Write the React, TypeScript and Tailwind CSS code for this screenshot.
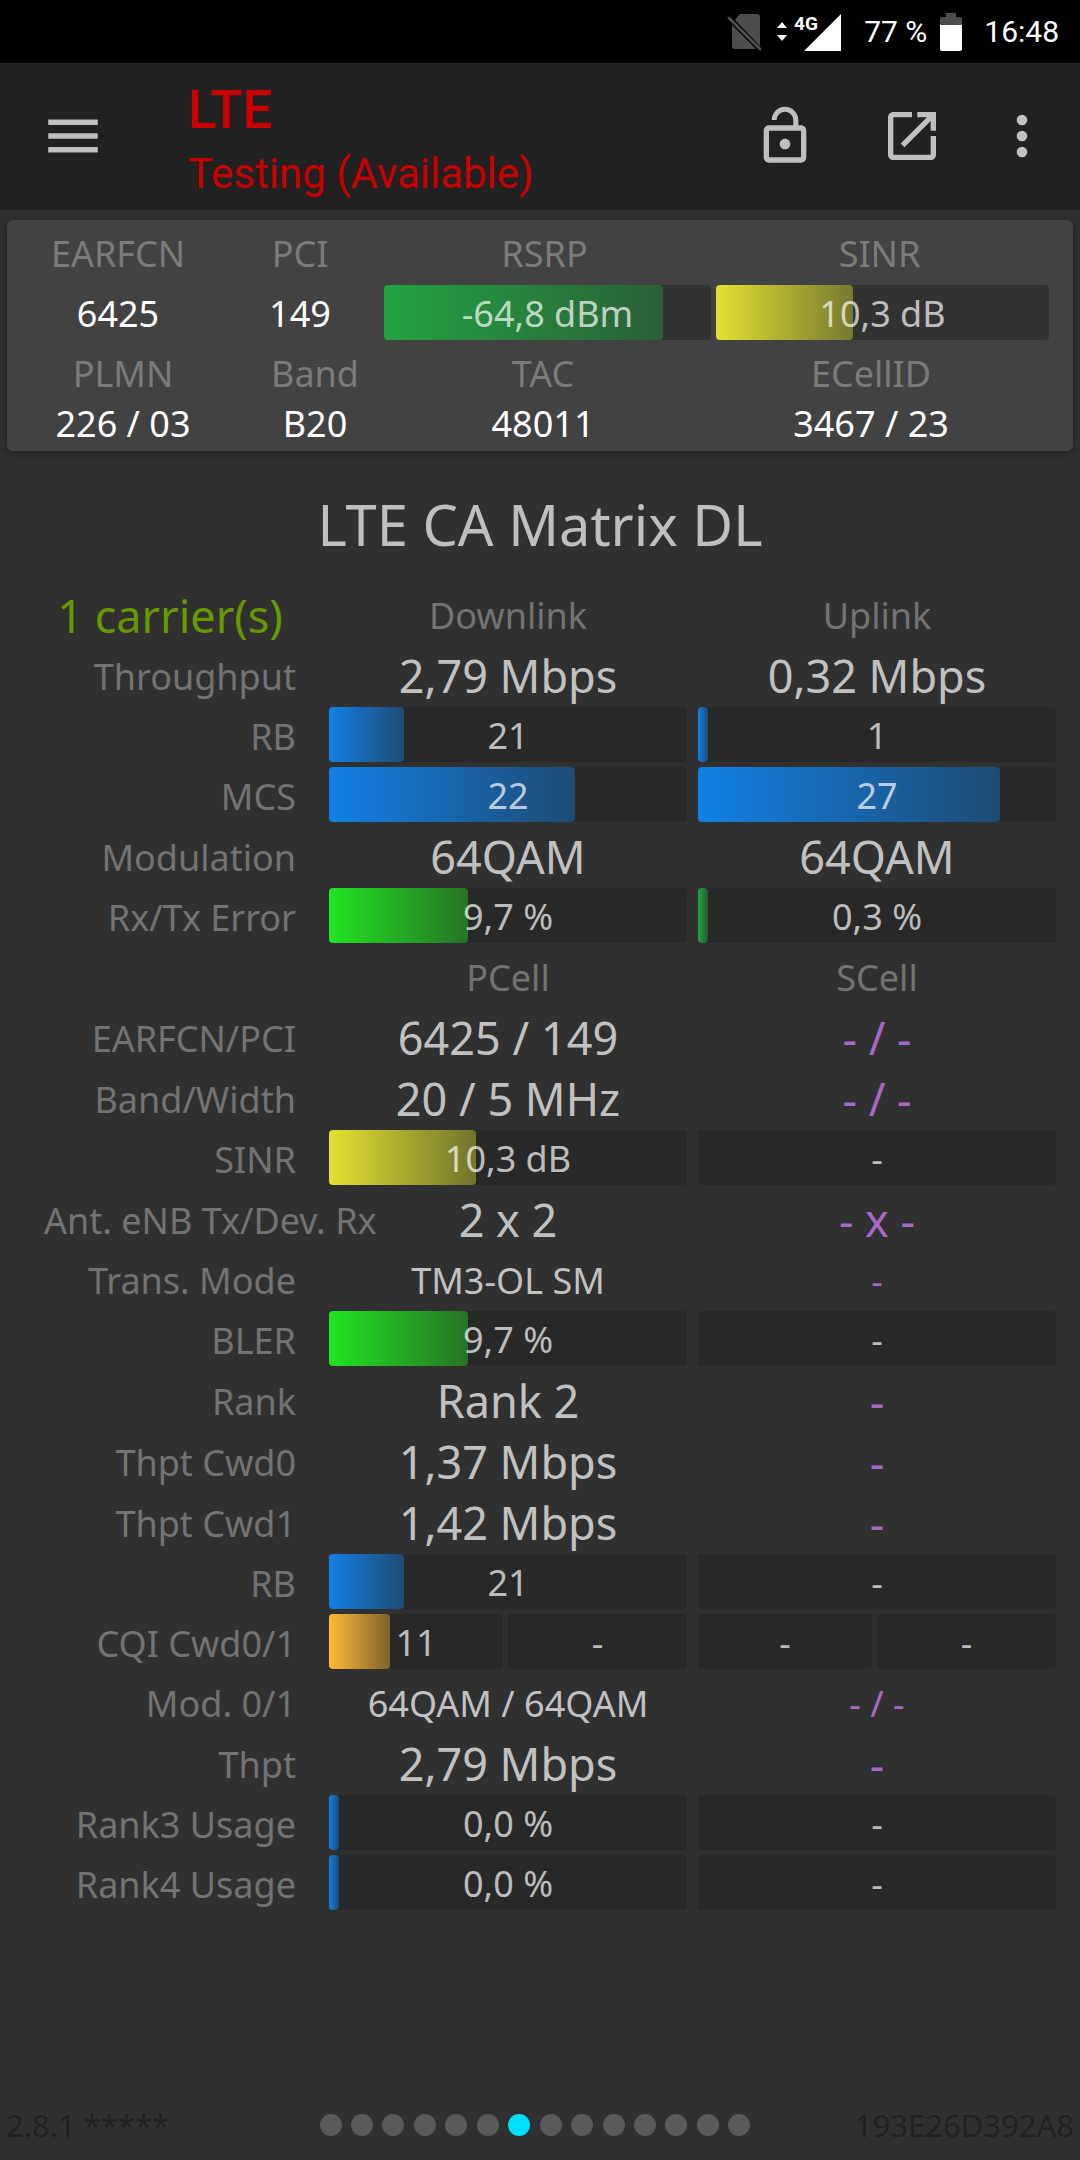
import React from 'react';
import clsx from 'clsx';

type Tone = 'blue' | 'green' | 'lime' | 'yellow' | 'orange';

interface BarData {
  text: string;
  fill?: number;
  tone?: Tone;
}

interface TextData {
  text: string;
  small?: boolean;
  muted?: boolean;
}

type CellData = { bars: BarData[] } | TextData;

interface RowData {
  label: string;
  cells: [CellData, CellData];
}

const TONES: Record<Tone, string> = {
  blue: 'from-[#1180e6] to-[#1180e6]/40',
  green: 'from-[#22a442] to-[#22a442]/40',
  lime: 'from-[#22e422] to-[#22e422]/40',
  yellow: 'from-[#e2e232] to-[#e2e232]/40',
  orange: 'from-[#ffba36] to-[#ffba36]/40',
};

const bar = (text: string, fill?: number, tone?: Tone): CellData => ({ bars: [{ text, fill, tone }] });
const none = (text = '-', small = false): CellData => ({ text, small, muted: true });

const TRAFFIC_ROWS: RowData[] = [
  { label: 'Throughput', cells: [{ text: '2,79 Mbps' }, { text: '0,32 Mbps' }] },
  { label: 'RB', cells: [bar('21', 21, 'blue'), bar('1', 2.8, 'blue')] },
  { label: 'MCS', cells: [bar('22', 68.8, 'blue'), bar('27', 84.4, 'blue')] },
  { label: 'Modulation', cells: [{ text: '64QAM' }, { text: '64QAM' }] },
  { label: 'Rx/Tx Error', cells: [bar('9,7 %', 38.8, 'lime'), bar('0,3 %', 2.8, 'green')] },
];

const CELL_ROWS: RowData[] = [
  { label: 'EARFCN/PCI', cells: [{ text: '6425 / 149' }, none('- / -')] },
  { label: 'Band/Width', cells: [{ text: '20 / 5 MHz' }, none('- / -')] },
  { label: 'SINR', cells: [bar('10,3 dB', 41, 'yellow'), bar('-')] },
  { label: 'Ant. eNB Tx/Dev. Rx', cells: [{ text: '2 x 2' }, none('- x -')] },
  { label: 'Trans. Mode', cells: [{ text: 'TM3-OL SM', small: true }, none('-', true)] },
  { label: 'BLER', cells: [bar('9,7 %', 38.8, 'lime'), bar('-')] },
  { label: 'Rank', cells: [{ text: 'Rank 2' }, none()] },
  { label: 'Thpt Cwd0', cells: [{ text: '1,37 Mbps' }, none()] },
  { label: 'Thpt Cwd1', cells: [{ text: '1,42 Mbps' }, none()] },
  { label: 'RB', cells: [bar('21', 21, 'blue'), bar('-')] },
  {
    label: 'CQI Cwd0/1',
    cells: [
      { bars: [{ text: '11', fill: 35, tone: 'orange' }, { text: '-' }] },
      { bars: [{ text: '-' }, { text: '-' }] },
    ],
  },
  { label: 'Mod. 0/1', cells: [{ text: '64QAM / 64QAM', small: true }, none('- / -', true)] },
  { label: 'Thpt', cells: [{ text: '2,79 Mbps' }, none()] },
  { label: 'Rank3 Usage', cells: [bar('0,0 %', 2.8, 'blue'), bar('-')] },
  { label: 'Rank4 Usage', cells: [bar('0,0 %', 2.8, 'blue'), bar('-')] },
];

const PAGE_COUNT = 14;
const ACTIVE_PAGE = 6;

const Meter: React.FC<BarData & { track?: string }> = ({ text, fill, tone, track = 'bg-[#282828]' }) => (
  <div className={clsx('relative h-[55px] rounded-sm text-center', track)}>
    {fill && tone && (
      <div
        className={clsx('absolute inset-y-0 left-0 rounded-sm bg-linear-to-r', TONES[tone])}
        style={{ width: `${fill}%` }}
      />
    )}
    <span className="relative block leading-[57px] text-white/70">{text}</span>
  </div>
);

const ValueCell: React.FC<{ data: CellData }> = ({ data }) => {
  if ('bars' in data) {
    return (
      <td className="p-0 pr-[11px] pb-[5px]">
        <div className={clsx('grid gap-[5px]', data.bars.length > 1 ? 'grid-cols-[174fr_179fr]' : 'grid-cols-1')}>
          {data.bars.map((b, i) => (
            <Meter key={i} {...b} />
          ))}
        </div>
      </td>
    );
  }

  return (
    <td
      className={clsx(
        'pt-0.5 pr-[11px] pb-[3px] text-center whitespace-nowrap',
        data.small ? 'leading-[55px]' : 'text-[45px] leading-[56px]',
        data.muted ? 'text-[#a868c8]' : 'text-[#c1c1c1]'
      )}
    >
      {data.text}
    </td>
  );
};

const Row: React.FC<{ row: RowData }> = ({ row }) => (
  <tr>
    <th
      scope="row"
      className={clsx(
        'pt-0.5 pr-[33px] pb-[3px] pl-11 font-normal whitespace-nowrap leading-[55px] text-[#737373]',
        row.label.length > 15 ? 'text-left' : 'text-right'
      )}
    >
      {row.label}
    </th>
    <ValueCell data={row.cells[0]} />
    <ValueCell data={row.cells[1]} />
  </tr>
);

const ColumnHead: React.FC<{ children: string }> = ({ children }) => (
  <th scope="col" className="pt-0.5 pr-[11px] pb-[3px] text-center font-normal leading-[55px] text-[#737373]">
    {children}
  </th>
);

const StatusBar = () => (
  <div className="flex h-[63px] items-center justify-end bg-black pr-[21px] font-[Roboto,sans-serif] text-[30px] text-white">
    <svg className="mr-[13px] h-[38px] w-[36px]" viewBox="0 0 36 38">
      <path d="M13 1h17q3 0 3 3v29L8 7zM5 12l24 24H8q-3 0-3-3z" fill="#4d4d4d" />
      <path d="M2 5l31 31" stroke="#4d4d4d" strokeWidth="3" strokeLinecap="round" />
    </svg>
    <svg className="mr-[23px] h-[42px] w-[65px]" viewBox="0 -2 65 42" fill="#fff">
      <path d="M6 9l5 6H1zM6 28l-5-6h10z" />
      <path d="M65 1v37H28z" />
      <text x="18" y="17" fontSize="19" fontWeight="700">4G</text>
    </svg>
    <span>77 %</span>
    <svg className="mr-[22px] ml-[13px] h-[38px] w-[22px]" viewBox="0 0 22 38">
      <path d="M6 0h10v4h4q2 0 2 2v6H0V6q0-2 2-2h4z" fill="#4d4d4d" />
      <path d="M0 12h22v24q0 2-2 2H2q-2 0-2-2z" fill="#fff" />
    </svg>
    <span>16:48</span>
  </div>
);

const Header = () => (
  <header className="flex h-[147px] items-center bg-[#212121] pr-[26px] pb-0.5 pl-10 font-[Roboto,sans-serif] text-[#c0c0c0]">
    <button type="button" aria-label="Menu">
      <svg className="size-[66px]" viewBox="0 0 24 24" fill="currentColor">
        <path d="M3 18h18v-2H3v2zm0-5h18v-2H3v2zm0-7v2h18V6H3z" />
      </svg>
    </button>
    <div className="ml-[82px] flex-1 pt-2.5 text-[#c80000]">
      <h1 className="text-[53px] leading-[66px] font-medium">LTE</h1>
      <p className="text-[42px] leading-[62px]">Testing (Available)</p>
    </div>
    <div className="flex">
      <button type="button" aria-label="Unlock">
        <svg className="size-16" viewBox="0 0 24 24" fill="currentColor">
          <path d="M12 17c1.1 0 2-.9 2-2s-.9-2-2-2-2 .9-2 2 .9 2 2 2zm6-9h-1V6c0-2.76-2.24-5-5-5S7 3.24 7 6h1.9c0-1.71 1.39-3.1 3.1-3.1 1.71 0 3.1 1.39 3.1 3.1v2H6c-1.1 0-2 .9-2 2v10c0 1.1.9 2 2 2h12c1.1 0 2-.9 2-2V10c0-1.1-.9-2-2-2zm0 12H6V10h12v10z" />
        </svg>
      </button>
      <button type="button" aria-label="Open in new window" className="ml-[63px]">
        <svg className="size-16" viewBox="0 0 24 24" fill="currentColor">
          <path d="M19 19H5V5h7V3H5c-1.11 0-2 .9-2 2v14c0 1.1.89 2 2 2h14c1.1 0 2-.9 2-2v-7h-2v7zM14 3v2h3.59l-9.83 9.83 1.41 1.41L19 6.41V10h2V3h-7z" />
        </svg>
      </button>
      <button type="button" aria-label="More options" className="ml-[46px]">
        <svg className="size-16" viewBox="0 0 24 24" fill="currentColor">
          <circle cx="12" cy="6" r="2" />
          <circle cx="12" cy="12" r="2" />
          <circle cx="12" cy="18" r="2" />
        </svg>
      </button>
    </div>
  </header>
);

const SummaryLabel: React.FC<{ children: string; className?: string }> = ({ children, className }) => (
  <dt className={clsx('leading-[50px] text-[#7b7b7b]', className)}>{children}</dt>
);

const SummaryCard = () => (
  <section className="mx-[7px] mt-2.5 rounded-md bg-[#424242] pb-0.5 text-center shadow-[0_2px_6px_rgba(0,0,0,0.4)]">
    <dl className="grid grid-cols-[222fr_155fr_332fr_333fr] pt-[9px] pr-6">
      <div>
        <SummaryLabel>EARFCN</SummaryLabel>
        <dd className="mt-1.5 leading-[57px] text-white">6425</dd>
      </div>
      <div className="pr-[13px]">
        <SummaryLabel>PCI</SummaryLabel>
        <dd className="mt-1.5 leading-[57px] text-white">149</dd>
      </div>
      <div className="pr-[5px]">
        <SummaryLabel className="pr-1.5">RSRP</SummaryLabel>
        <dd className="mt-1.5">
          <Meter text="-64,8 dBm" fill={85.3} tone="green" track="bg-[#323232]" />
        </dd>
      </div>
      <div>
        <SummaryLabel className="pr-1.5">SINR</SummaryLabel>
        <dd className="mt-1.5">
          <Meter text="10,3 dB" fill={41.1} tone="yellow" track="bg-[#323232]" />
        </dd>
      </div>
    </dl>
    <dl className="grid grid-cols-[232fr_152fr_304fr_352fr] pt-[7px] pr-[26px]">
      {[
        ['PLMN', '226 / 03'],
        ['Band', 'B20'],
        ['TAC', '48011'],
        ['ECellID', '3467 / 23'],
      ].map(([label, value]) => (
        <div key={label}>
          <SummaryLabel>{label}</SummaryLabel>
          <dd className="leading-[50px] text-white">{value}</dd>
        </div>
      ))}
    </dl>
  </section>
);

const Footer = () => (
  <footer className="mt-auto grid grid-cols-[1fr_auto_1fr] items-center px-1.5 pb-3 text-[31px] leading-[46px] text-[#202020]">
    <span>2.8.1 *****</span>
    <nav aria-label="Pages" className="mr-2.5 flex w-[431px] justify-between">
      {[...Array(PAGE_COUNT)].map((_, i) => (
        <button
          key={i}
          type="button"
          aria-label={`Page ${i + 1}`}
          className={clsx('size-[22px] rounded-full', i === ACTIVE_PAGE ? 'bg-[#00dfff]' : 'bg-[#5a5a5a]')}
        />
      ))}
    </nav>
    <span className="text-right">193E26D392A8</span>
  </footer>
);

export default function App() {
  return (
    <div className="flex min-h-screen flex-col bg-[#303030] font-['Noto_Sans',sans-serif] text-[36px]">
      <StatusBar />
      <Header />
      <SummaryCard />
      <main>
        <h2 className="mt-[41px] mb-[30px] text-center text-[56px] leading-[64px] text-[#bfbfbf]">LTE CA Matrix DL</h2>
        <div className="pr-[13px]">
          <table className="w-full table-fixed border-collapse">
            <colgroup>
              <col className="w-[329px]" />
              <col />
              <col />
            </colgroup>
            <tbody>
              <tr>
                <th className="pt-0.5 pr-[33px] pb-[3px] pl-11 text-center text-[45px] leading-[55px] font-normal whitespace-nowrap text-[#669900]">
                  1 carrier(s)
                </th>
                <ColumnHead>Downlink</ColumnHead>
                <ColumnHead>Uplink</ColumnHead>
              </tr>
              {TRAFFIC_ROWS.map((row) => (
                <Row key={row.label} row={row} />
              ))}
              <tr>
                <td />
                <ColumnHead>PCell</ColumnHead>
                <ColumnHead>SCell</ColumnHead>
              </tr>
              {CELL_ROWS.map((row) => (
                <Row key={row.label} row={row} />
              ))}
            </tbody>
          </table>
        </div>
      </main>
      <Footer />
    </div>
  );
}
